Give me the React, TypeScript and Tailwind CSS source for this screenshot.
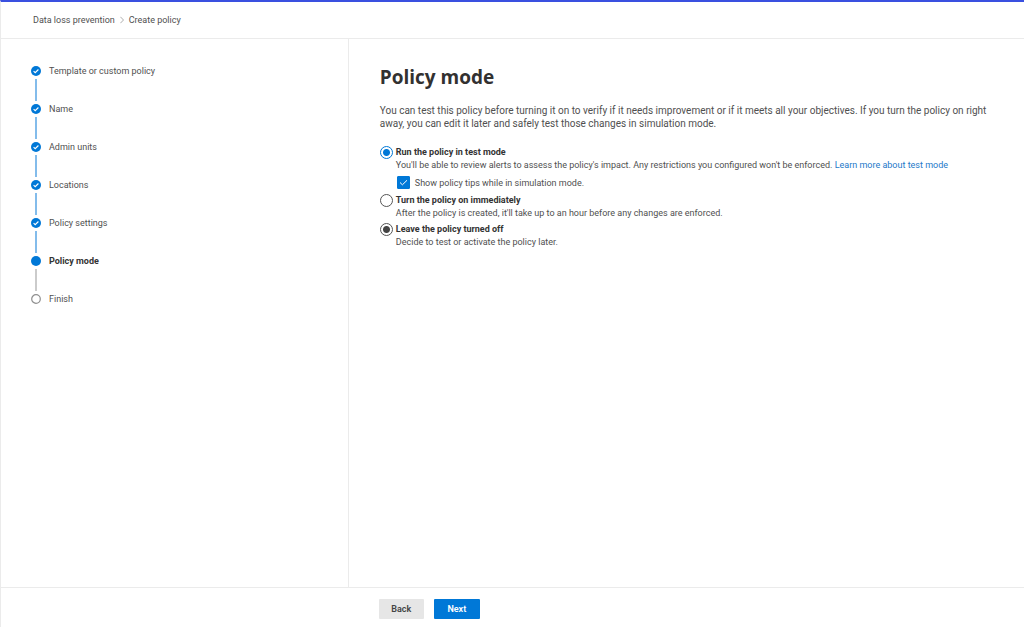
import React from "react";

type StepState = "done" | "current" | "upcoming";

const steps: { label: string; state: StepState }[] = [
  { label: "Template or custom policy", state: "done" },
  { label: "Name", state: "done" },
  { label: "Admin units", state: "done" },
  { label: "Locations", state: "done" },
  { label: "Policy settings", state: "done" },
  { label: "Policy mode", state: "current" },
  { label: "Finish", state: "upcoming" },
];

function StepMarker({ state }: { state: StepState }) {
  return (
    <svg viewBox="0 0 10 10" className="size-[10px] shrink-0" aria-hidden="true">
      {state === "upcoming" ? (
        <circle cx="5" cy="5" r="4.3" fill="#fff" stroke="#8f8f8f" strokeWidth="1.2" />
      ) : (
        <circle cx="5" cy="5" r="5" fill="#0078d7" />
      )}
      {state === "done" && (
        <path d="M2.6 5.2 4.2 6.7 7.4 3.5" fill="none" stroke="#fff" strokeWidth="1.1" />
      )}
    </svg>
  );
}

function Steps() {
  return (
    <ol className="flex flex-col">
      {steps.map((step, i) => (
        <li key={step.label} className="flex gap-2">
          <div className="flex flex-col items-center">
            <StepMarker state={step.state} />
            {i < steps.length - 1 && (
              <span
                className={
                  step.state === "done"
                    ? "my-[3px] h-[22px] w-[2px] bg-[#83bceb]"
                    : "my-[3px] h-[22px] w-[2px] bg-[#cbcbcb]"
                }
              />
            )}
          </div>
          <span
            className={
              step.state === "current"
                ? "text-[9px] leading-[11px] font-bold text-[#333]"
                : "text-[9px] leading-[11px]"
            }
          >
            {step.label}
          </span>
        </li>
      ))}
    </ol>
  );
}

interface OptionProps {
  id: string;
  group: string;
  title: string;
  accent?: boolean;
  checked?: boolean;
  children: React.ReactNode;
}

function Option({ id, group, title, accent, checked, children }: OptionProps) {
  return (
    <div className="flex gap-[3px]">
      <input
        type="radio"
        id={id}
        name={group}
        defaultChecked={checked}
        className={
          accent
            ? "size-[13px] shrink-0 appearance-none rounded-full border border-[#0078d7] bg-white checked:bg-[radial-gradient(circle,#0078d7_3px,transparent_4px)]"
            : "size-[13px] shrink-0 appearance-none rounded-full border border-[#555] bg-white checked:bg-[radial-gradient(circle,#444_3px,transparent_4px)]"
        }
      />
      <div className="text-[9px] leading-[12px]">
        <label htmlFor={id} className="block leading-[13px] font-bold text-[#333]">
          {title}
        </label>
        {children}
      </div>
    </div>
  );
}

export default function App() {
  return (
    <div className="flex min-h-screen flex-col border-t-2 border-l border-t-[#3a50e0] border-l-[#ebebeb] bg-white font-[Roboto,'Noto_Sans',sans-serif] text-[#505050]">
      <header className="border-b border-[#ebebeb] px-8 py-3">
        <nav aria-label="Breadcrumb" className="flex items-center gap-[5px] text-[9px] leading-[12px]">
          <a href="#dlp">Data loss prevention</a>
          <svg viewBox="0 0 4 8" className="h-2 w-1" fill="none" stroke="#999" strokeWidth="0.8" aria-hidden="true">
            <path d="M0.4 0.8 3.5 4 0.4 7.2" />
          </svg>
          <span aria-current="page">Create policy</span>
        </nav>
      </header>

      <div className="flex flex-1">
        <aside className="w-[34%] shrink-0 border-r border-[#ebebeb] px-[30px] pt-[27px] pb-7">
          <Steps />
        </aside>

        <main className="flex-1 pt-6 pr-5 pl-[31px]">
          <h1 className="font-['Open_Sans','Noto_Sans',sans-serif] text-[19px] leading-[28px] font-bold text-[#323130]">
            Policy mode
          </h1>
          <p className="mt-[13px] text-[10px] leading-[13px]">
            You can test this policy before turning it on to verify if it needs improvement or if it meets all your
            objectives. If you turn the policy on right away, you can edit it later and safely test those changes in
            simulation mode.
          </p>

          <div className="mt-4 flex flex-col gap-1">
            <Option id="test-mode" group="mode" title="Run the policy in test mode" accent checked>
              <p>
                You'll be able to review alerts to assess the policy's impact. Any restrictions you configured won't be
                enforced.{" "}
                <a href="#test-mode-help" className="text-[#2479c9]">
                  Learn more about test mode
                </a>
              </p>
              <div className="mt-[5px] mb-px flex items-center gap-[5px] pl-px">
                <input
                  type="checkbox"
                  id="tips"
                  defaultChecked
                  className="peer order-1 size-[13px] shrink-0 appearance-none rounded-[1px] border border-[#0078d7] checked:bg-[#0078d7]"
                />
                <svg
                  viewBox="0 0 13 13"
                  className="pointer-events-none order-2 -ml-[18px] size-[13px] opacity-0 peer-checked:opacity-100"
                  fill="none"
                  stroke="#fff"
                  aria-hidden="true"
                >
                  <path d="M3 6.5 5.4 8.8 10 4.3" />
                </svg>
                <label htmlFor="tips" className="order-3">
                  Show policy tips while in simulation mode.
                </label>
              </div>
            </Option>
            <Option id="turn-on" group="mode" title="Turn the policy on immediately">
              <p>After the policy is created, it'll take up to an hour before any changes are enforced.</p>
            </Option>
            <Option id="turn-off" group="mode-off" title="Leave the policy turned off" checked>
              <p>Decide to test or activate the policy later.</p>
            </Option>
          </div>
        </main>
      </div>

      <footer className="flex border-t border-[#ebebeb] pt-[11px] pb-2">
        <div className="w-[34%] shrink-0" />
        <div className="flex gap-[10px] pl-[30px] text-[9px] leading-[20px] font-semibold">
          <button type="button" className="w-[45px] rounded-[1px] bg-[#e6e6e6] text-[#444]">
            Back
          </button>
          <button type="button" className="w-[46px] rounded-[1px] bg-[#0078d7] text-white">
            Next
          </button>
        </div>
      </footer>
    </div>
  );
}
